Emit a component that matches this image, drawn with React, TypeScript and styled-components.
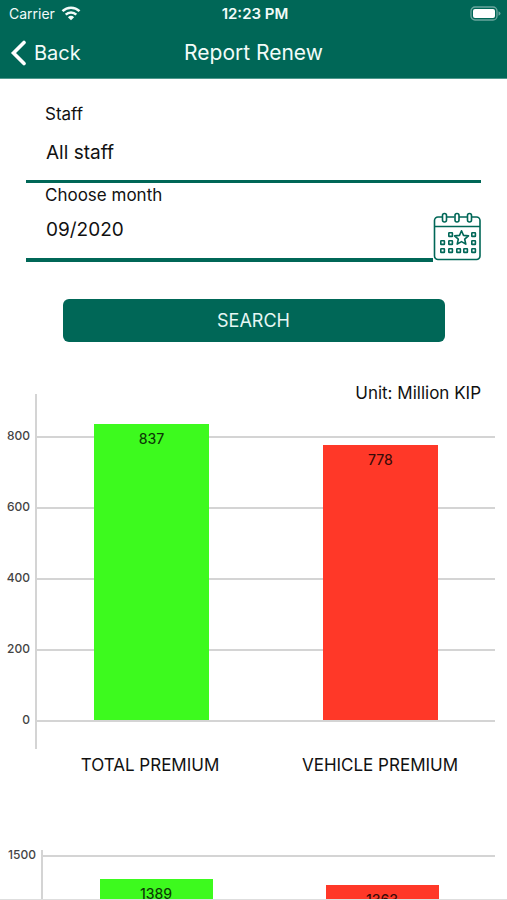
import React from "react";
import styled, { createGlobalStyle } from "styled-components";

const brand = "#006757";

const GlobalStyle = createGlobalStyle`
  *, *::before, *::after { box-sizing: border-box; }
  body {
    margin: 0;
    background: #fff;
    color: #111;
    font-family: Inter, "Liberation Sans", sans-serif;
  }
  button, input, select { font: inherit; color: inherit; }
`;

const Screen = styled.div`
  display: flex;
  flex-direction: column;
  height: 100vh;
  border-bottom: 1px solid #dedede;
`;

const Header = styled.header`
  flex: none;
  background: ${brand};
  color: #f2fbf9;
  border-bottom: 1px solid #4f988d;
`;

const StatusBar = styled.div`
  display: grid;
  grid-template-columns: 1fr auto 1fr;
  align-items: center;
  height: 27px;
  padding: 0 6px 0 9px;
  font-size: 14px;
  line-height: 16px;
`;

const Carrier = styled.span`
  display: flex;
  align-items: center;
  gap: 6px;
`;

const Clock = styled.time`
  font-size: 15px;
  font-weight: 600;
`;

const BatterySlot = styled.span`
  display: flex;
  justify-content: flex-end;
`;

const NavBar = styled.nav`
  display: grid;
  grid-template-columns: 1fr auto 1fr;
  align-items: center;
  height: 51px;
  padding: 0 10px;
`;

const BackButton = styled.button`
  display: flex;
  align-items: center;
  justify-self: start;
  gap: 8px;
  padding: 0;
  border: 0;
  background: none;
  font-size: 20px;
  line-height: 24px;
`;

const Title = styled.h1`
  margin: 0;
  font-size: 21px;
  font-weight: 400;
  line-height: 24px;
`;

const Content = styled.main`
  flex: 1;
  min-height: 0;
  overflow-y: auto;
  scrollbar-width: none;
`;

const Form = styled.form`
  padding: 24px 26px 0;
`;

const Field = styled.div<{ $line: number }>`
  flex: 1;
  min-width: 0;
  border-bottom: ${(p) => p.$line}px solid ${brand};
`;

const Label = styled.label`
  display: block;
  padding-left: 19px;
  font-size: 17px;
  line-height: 22px;
`;

const fieldText = `
  display: block;
  width: 100%;
  padding: 0 0 0 20px;
  border: 0;
  outline: 0;
  background: none;
  font-size: 19px;
`;

const StaffSelect = styled.select`
  ${fieldText}
  appearance: none;
  height: 55px;
`;

const MonthInput = styled.input`
  ${fieldText}
  height: 52px;
  padding-bottom: 5px;
`;

const MonthRow = styled.div`
  display: flex;
  align-items: flex-end;
  padding-top: 1px;
`;

const CalendarButton = styled.button`
  display: flex;
  padding: 0;
  border: 0;
  background: none;
  color: ${brand};
`;

const SearchButton = styled.button`
  display: block;
  width: calc(100% - 73px);
  height: 43px;
  margin: 37px auto 0;
  border: 0;
  border-radius: 6px;
  background: ${brand};
  color: #e6f7f4;
  font-size: 18px;
`;

const Unit = styled.p`
  margin: 41px 26px -9px;
  font-size: 17px;
  line-height: 20px;
  text-align: right;
`;

const ChartFigure = styled.figure`
  margin: 0 12px 0 6px;
`;

const ChartBody = styled.div<{ $axis: number }>`
  display: grid;
  grid-template-columns: ${(p) => p.$axis}px 1fr;
`;

const TickColumn = styled.div<{ $top: number; $step: number }>`
  display: grid;
  grid-auto-rows: ${(p) => p.$step}px;
  height: 0;
  margin-top: ${(p) => p.$top - 8}px;
  padding-right: 5px;
  font-size: 12px;
  font-weight: 500;
  line-height: 16px;
  color: #444;
  text-align: right;
`;

const Plot = styled.div<{ $height: number }>`
  display: grid;
  height: ${(p) => p.$height}px;
  border-left: 2px solid #d4d4d4;
`;

const Lines = styled.div<{ $top: number }>`
  grid-area: 1 / 1;
  padding-top: ${(p) => p.$top}px;
`;

const Line = styled.div<{ $step: number }>`
  height: ${(p) => p.$step}px;
  border-top: 2px solid #d4d4d4;
`;

const Bars = styled.div<{ $bottom: number }>`
  grid-area: 1 / 1;
  display: flex;
  align-items: flex-end;
  justify-content: space-around;
  padding-bottom: ${(p) => p.$bottom}px;
`;

const Bar = styled.div<{ $color: string; $size: number }>`
  width: 25%;
  padding-top: 5px;
  background: ${(p) => p.$color};
  font-size: ${(p) => p.$size}px;
  font-weight: 500;
  line-height: 20px;
  text-align: center;
  color: rgba(0, 0, 0, 0.78);
`;

const Categories = styled.figcaption<{ $axis: number }>`
  display: flex;
  padding: 5px 0 0 ${(p) => p.$axis}px;
  font-size: 17px;
  line-height: 22px;
`;

const Category = styled.span`
  flex: 1;
  text-align: center;
`;

const ChartGap = styled.div`
  height: 74px;
`;

type Datum = { value: number; color: string };

type ChartProps = {
  data: Datum[];
  ticks: number[];
  axis: number;
  top: number;
  step: number;
  zeroAt: number;
  tail: number;
  pxPerUnit: number;
  valueSize: number;
  categories?: string[];
};

function BarChart({ data, ticks, axis, top, step, zeroAt, tail, pxPerUnit, valueSize, categories }: ChartProps) {
  return (
    <ChartFigure>
      <ChartBody $axis={axis}>
        <TickColumn $top={top} $step={step}>
          {ticks.map((t) => (
            <span key={t}>{t}</span>
          ))}
        </TickColumn>
        <Plot $height={zeroAt + tail}>
          <Lines $top={top}>
            {ticks.map((t, i) => (
              <Line key={t} $step={i === ticks.length - 1 ? 2 : step} />
            ))}
          </Lines>
          <Bars $bottom={tail}>
            {data.map((d) => (
              <Bar
                key={d.value}
                $color={d.color}
                $size={valueSize}
                style={{ height: Math.round(d.value * pxPerUnit) }}
              >
                {d.value}
              </Bar>
            ))}
          </Bars>
        </Plot>
      </ChartBody>
      {categories && (
        <Categories $axis={axis}>
          {categories.map((c) => (
            <Category key={c}>{c}</Category>
          ))}
        </Categories>
      )}
    </ChartFigure>
  );
}

const WifiIcon = () => (
  <svg width="20" height="15" viewBox="0 0 20 15" fill="none" stroke="currentColor" strokeWidth="2.5" aria-hidden="true">
    <path d="M1.5 5.2a12.2 12.2 0 0 1 17 0" />
    <path d="M4.7 8.6a7.6 7.6 0 0 1 10.6 0" />
    <path d="M10 14.3 6.9 11.2a4.5 4.5 0 0 1 6.2 0z" fill="currentColor" stroke="none" />
  </svg>
);

const BatteryIcon = () => (
  <svg width="31" height="15" viewBox="0 0 31 15" aria-hidden="true">
    <rect x="1" y="1" width="26" height="13" rx="4" fill="none" stroke="#6aa79e" strokeWidth="1.3" />
    <rect x="3" y="3" width="22" height="9" rx="2" fill="#fff" />
    <path d="M28.5 5.3q2 .8 2 2.2t-2 2.2z" fill="#6aa79e" />
  </svg>
);

const ChevronIcon = () => (
  <svg width="16" height="26" viewBox="0 0 16 26" fill="none" stroke="#fff" strokeWidth="3.6" strokeLinecap="round" strokeLinejoin="miter" aria-hidden="true">
    <path d="M14 2.5 3.5 13 14 23.5" />
  </svg>
);

const dots = [
  [15, 20], [38, 20],
  [7, 28], [15, 28], [38, 28],
  [7, 36], [15, 36], [23, 36], [30, 36], [38, 36],
];

const CalendarIcon = () => (
  <svg width="48" height="50" viewBox="0 0 48 50" fill="none" stroke="currentColor" strokeWidth="1.6" strokeLinejoin="round" aria-hidden="true">
    <path d="M9.5 5H5a3.5 3.5 0 0 0-3.5 3.5V44A3.5 3.5 0 0 0 5 47.500H43.500A3.500 3.500 0 0 0 47 44V8.500A3.500 3.500 0 0 0 43.500 5H38.500M14 5H21.500M26 5H34M1.500 14.500H47" />
    {[11.5, 24, 36.5].map((x) => (
      <rect key={x} x={x - 2} y="1.5" width="4" height="8.5" rx="2" />
    ))}
    {dots.map(([x, y]) => (
      <rect key={`${x}-${y}`} x={x + 0.8} y={y + 0.8} width="3.6" height="3.6" rx="0.4" />
    ))}
    <path d="M28.500 18.800l2 4.600 5 .5-3.800 3.300 1.100 4.900-4.300-2.500-4.300 2.500 1.100-4.900-3.800-3.300 5-.5z" />
  </svg>
);

const green = "#3dfa1e";
const red = "#ff3828";

export default function App() {
  return (
    <>
      <GlobalStyle />
      <Screen>
        <Header>
          <StatusBar>
            <Carrier>Carrier <WifiIcon /></Carrier>
            <Clock>12:23 PM</Clock>
            <BatterySlot><BatteryIcon /></BatterySlot>
          </StatusBar>
          <NavBar>
            <BackButton type="button"><ChevronIcon />Back</BackButton>
            <Title>Report Renew</Title>
          </NavBar>
        </Header>
        <Content>
          <Form onSubmit={(e) => e.preventDefault()}>
            <Field $line={3}>
              <Label htmlFor="staff">Staff</Label>
              <StaffSelect id="staff" defaultValue="all">
                <option value="all">All staff</option>
              </StaffSelect>
            </Field>
            <MonthRow>
              <Field $line={4}>
                <Label htmlFor="month">Choose month</Label>
                <MonthInput id="month" type="text" defaultValue="09/2020" />
              </Field>
              <CalendarButton type="button" aria-label="Open calendar"><CalendarIcon /></CalendarButton>
            </MonthRow>
            <SearchButton type="submit">SEARCH</SearchButton>
          </Form>
          <Unit>Unit: Million KIP</Unit>
          <BarChart
            data={[{ value: 837, color: green }, { value: 778, color: red }]}
            ticks={[800, 600, 400, 200, 0]}
            axis={29}
            top={42}
            step={71}
            zeroAt={326}
            tail={29}
            pxPerUnit={0.354}
            valueSize={14}
            categories={["TOTAL PREMIUM", "VEHICLE PREMIUM"]}
          />
          <ChartGap />
          <BarChart
            data={[{ value: 1389, color: green }, { value: 1363, color: red }]}
            ticks={[1500]}
            axis={35}
            top={5}
            step={110}
            zeroAt={335}
            tail={29}
            pxPerUnit={0.22}
            valueSize={14}
          />
        </Content>
      </Screen>
    </>
  );
}
